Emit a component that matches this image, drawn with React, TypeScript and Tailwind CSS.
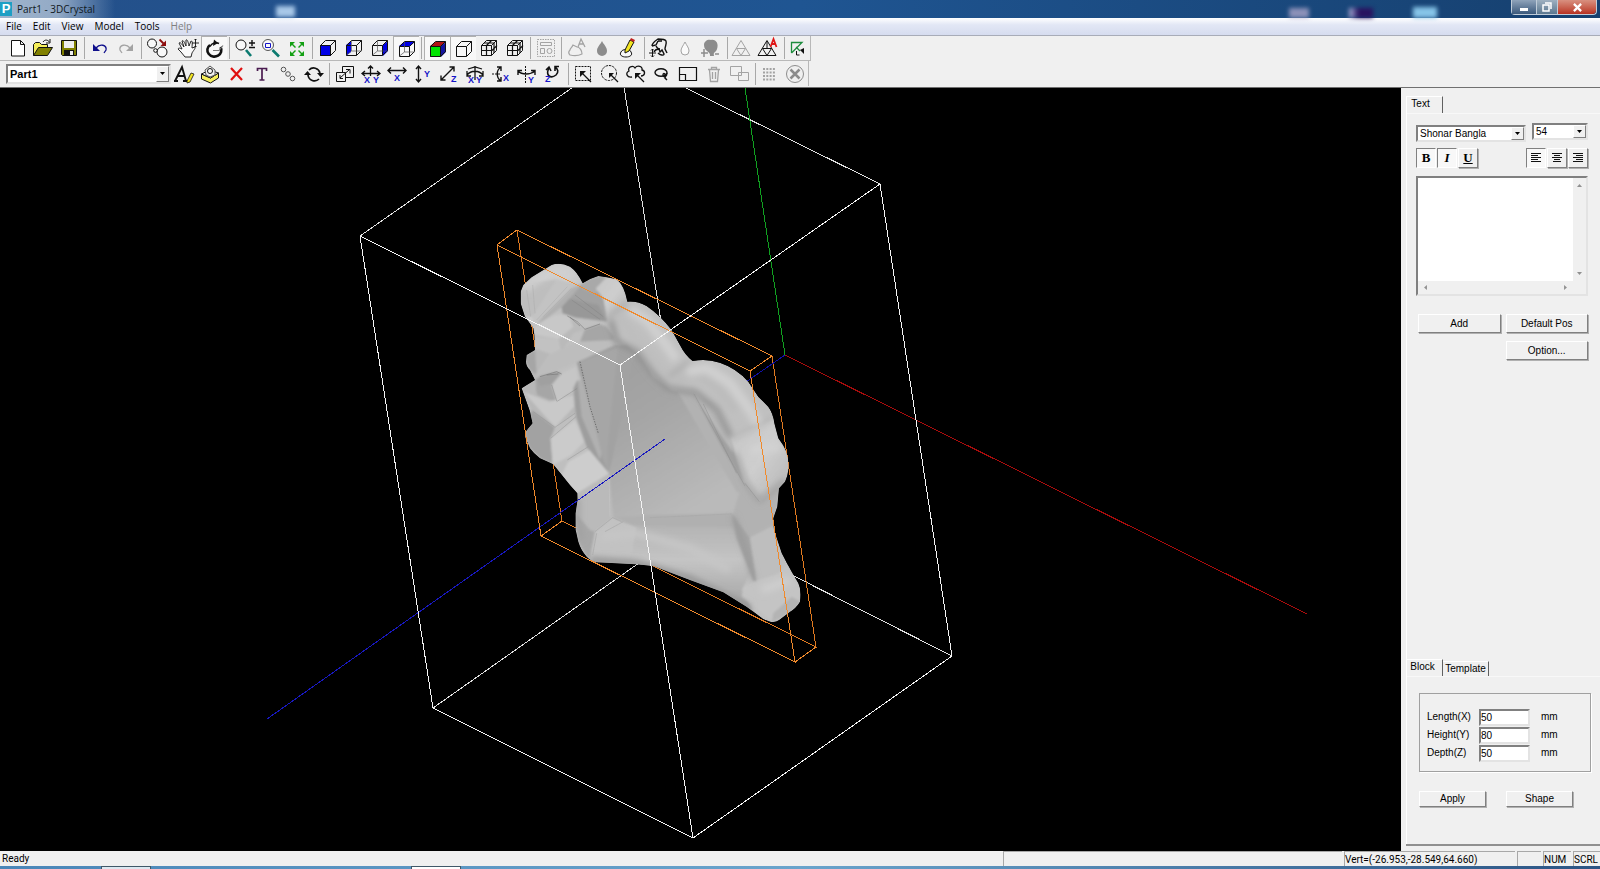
import { useState } from 'react';
import type { ReactNode } from 'react';

type Tool = { name: string; icon?: ReactNode; pressed?: boolean; disabled?: boolean };

const SEP: Tool = { name: 'sep' };
const GAP: Tool = { name: 'gap' };

const K = '#111';
const G = '#a3a3a3';
const B = '#1414c8';

/* ---------- toolbar icons, 24x24 grid ---------- */

function Cube({ face, mesh }: { face?: 'front' | 'left' | 'right' | 'top' | 'solid'; mesh?: boolean }) {
  const c = '#0000e6';
  return (
    <>
      {face === 'solid' && (
        <>
          <path d="M4 9h11v11H4z" fill="#00e400" />
          <path d="M4 9l5-4h11l-5 4z" fill="#b01414" />
          <path d="M15 9l5-4v10l-5 5z" fill="#1414a0" />
        </>
      )}
      {face === 'front' && <path d="M4 9h11v11H4z" fill={c} />}
      {face === 'left' && <path d="M4 9l5-4v11l-5 4z" fill={c} />}
      {face === 'right' && <path d="M15 9l5-4v10l-5 5z" fill={c} />}
      {face === 'top' && <path d="M4 9l5-4h11l-5 4z" fill={c} />}
      <path d="M4.500 9.500h10v10h-10zM4.500 9.500l5-5h10v10l-5 5M14.500 9.500l5-5" stroke={K} />
      {(face === 'left' || face === 'right' || face === 'top') && <path d="M9.500 5v10h10M9.500 15l-5 4" stroke="#555" strokeWidth=".7" />}
      {mesh && <path d="M9.500 9v11M4 14.500h11M14.500 4.500l-5 5M7 7h10v10M15 14.500l5-5" stroke={K} strokeWidth="1.200" />}
    </>
  );
}

const Letter = ({ x, y, c = B, children }: { x: number; y: number; c?: string; children: string }) => (
  <text x={x} y={y} fill={c} stroke="none" fontSize="9" fontWeight="700" fontFamily="Liberation Sans, Arial, sans-serif">{children}</text>
);

const row1: Tool[] = [
  { name: 'New', icon: <path d="M6.500 4.500h9l4 4v11.500h-13zM15.500 4.500v4h4" fill="#fff" stroke={K} /> },
  {
    name: 'Open',
    icon: (
      <>
        <path d="M2.500 19.500v-11l2-2h4l2 2h6v3" fill="#f5ee5a" stroke={K} />
        <path d="M2.500 19.500l5-8h14l-5 8z" fill="#808000" stroke={K} />
        <path d="M12 6c2-3 5-2 6.500 0M19 3v4h-4" stroke={K} />
      </>
    ),
  },
  {
    name: 'Save',
    icon: (
      <>
        <path d="M4.500 4.500h15v15h-14l-1-1z" fill="#808000" stroke={K} />
        <path d="M7 5h10v7H7z" fill="#efefef" />
        <path d="M7 14h10v6H7z" fill={K} />
        <path d="M13 15h3v4h-3z" fill="#efefef" />
      </>
    ),
  },
  SEP,
  { name: 'Undo', icon: <><path d="M8 12c4-5 11-3 10 2l-2 3" stroke="#10108c" strokeWidth="1.300" /><path d="M5 8v7h7z" fill="#10108c" /></> },
  { name: 'Redo', disabled: true, icon: <><path d="M16 12c-4-5-11-3-10 2l2 3" stroke={G} strokeWidth="1.300" /><path d="M19 8v7h-7z" fill={G} /></> },
  SEP,
  {
    name: 'Convert part',
    icon: (
      <>
        <circle cx="7" cy="7.500" r="4.500" fill="#f8f8f8" stroke={K} />
        <circle cx="17" cy="16" r="5" fill="#f8f8f8" stroke={K} />
        <circle cx="10.500" cy="14.500" r="1.800" fill="#f8f8f8" stroke={K} />
        <path d="M14.500 3.500l4 4" stroke="#8c0c0c" strokeWidth="1.800" /><path d="M21 4.500v5.500h-5.500z" fill="#8c0c0c" />
      </>
    ),
  },
  GAP,
  {
    name: 'Pan',
    icon: (
      <>
        <path d="M9 21l-4-5-3-3c1-2 3 0 4 0L3 7c1-1 2 0 5 4L6 5c1-1 2 0 4 5V4c1-1 2 1 3 6l2-5c2 0 1 3 1 7l3-1c1 1-2 4-3 6l-1 4z" fill="#fafafa" stroke={K} strokeWidth=".9" />
        <path d="M19.500 3v8M16 7h7M18.500 4l1-1 1 1M18.500 10l1 1 1-1" stroke={K} strokeWidth=".9" />
      </>
    ),
  },
  {
    name: 'Rotate', pressed: true,
    icon: (
      <>
        <path d="M7 8a7 6.500 0 1 0 10.500 2" stroke={K} strokeWidth="2.600" />
        <path d="M7 9.500c2-4 6-4.500 9-3" stroke={K} strokeWidth="1.600" />
        <path d="M11 2.500l4 3.500-5 3z" fill={K} />
        <path d="M10 13.500h6l4-5" stroke="#777" strokeWidth="1.200" />
      </>
    ),
  },
  SEP,
  {
    name: 'Zoom',
    icon: (
      <>
        <circle cx="8" cy="9" r="5" fill="#f8f8f8" stroke={K} />
        <path d="M13 14l5 6" stroke="#0c7a70" strokeWidth="2.600" />
        <path d="M16 7h6M19 4v6M16 11.500h6" stroke={K} strokeWidth="1.400" />
      </>
    ),
  },
  {
    name: 'Zoom window',
    icon: (
      <>
        <circle cx="9" cy="9" r="5.500" fill="#f8f8f8" stroke="#555" />
        <path d="M6.500 7.500h5v4h-5z" stroke={B} />
        <path d="M13.500 14l6.500 6.500" stroke="#0c7a70" strokeWidth="2.600" />
      </>
    ),
  },
  { name: 'Fit', icon: <path d="M5 6h5l-2 2 3 3-1 1-3-3-2 2zM19 6v5l-2-2-3 3-1-1 3-3-2-2zM5 20v-5l2 2 3-3 1 1-3 3 2 2zM19 20h-5l2-2-3-3 1-1 3 3 2-2z" fill="#14a014" /> },
  SEP,
  { name: 'Front view', icon: <Cube face="front" /> },
  { name: 'Left view', icon: <Cube face="left" /> },
  { name: 'Right view', icon: <Cube face="right" /> },
  { name: 'Top view', pressed: true, icon: <Cube face="top" /> },
  SEP,
  { name: 'Shaded', pressed: true, icon: <Cube face="solid" /> },
  { name: 'Box', pressed: true, icon: <Cube /> },
  { name: 'Wireframe', icon: <Cube mesh /> },
  { name: 'Points', icon: <Cube mesh /> },
  SEP,
  {
    name: 'Layout', disabled: true,
    icon: <><path d="M3.500 3.500h17v17h-17z" stroke={G} strokeDasharray="1.500 1" /><path d="M6.500 6.500h11v3h-11zM6.500 12.500h4v5h-4z" stroke={G} /><circle cx="15.500" cy="15" r="2.500" stroke={G} /></>,
  },
  SEP,
  {
    name: 'Text surface', disabled: true,
    icon: <><path d="M5 14c0-2 2-2 3-5l4 2c3 0 5 4 5 7-4 2-8 2-12 1-2-2-1-4 0-5z" stroke={G} strokeWidth="1.200" /><path d="M13 11l3-8 4 8M14.500 8h4.500" stroke={G} strokeWidth="1.300" /></>,
  },
  { name: 'Drop', disabled: true, icon: <path d="M11 5c2 4 5 6 5 10a5 5 0 0 1-10 0c0-4 3-6 5-10z" fill="#8c8c8c" /> },
  {
    name: 'Paint',
    icon: (
      <>
        <path d="M4 16c1-3 9-4 10 0 2 3-1 5-5 5s-7-2-5-5z" fill="#f8f8f8" stroke={K} />
        <path d="M8 14l5-10 4 2-5 9-4 2z" fill="#f2e420" stroke={K} />
        <path d="M13 4l1-2 4 2-1 2z" fill="#c02020" />
      </>
    ),
  },
  SEP,
  {
    name: 'Sculpt',
    icon: <><path d="M4 10c0-3 3-5 6-7 3 0 7 0 8 2 1 3-1 5-1 8l2 4M4 10l4-1 2-4M8 10c1 2 2 3 4 3M10 5l4 0M6 16c1-2 3-3 5-3l1 3 2-2 2 4c0 2-4 1-6-1" stroke={K} strokeWidth="1.400" /><path d="M4.500 13v8M1 17h7M3 14.500L4.500 13 6 14.500M3 19.500L4.500 21 6 19.500" stroke={K} /></>,
  },
  { name: 'Drop outline', disabled: true, icon: <path d="M11 6c2 4 4 6 4 9a4 4 0 0 1-8 0c0-3 2-5 4-9z" fill="#fafafa" stroke={G} /> },
  { name: 'Tree', disabled: true, icon: <><path d="M4 9c0-4 4-6 7-5 5-1 8 4 6 9-1 4-4 2-3 7h-4c1-5-6-4-6-11z" fill="#8c8c8c" /><path d="M4 13v8M1 17h7M15 18h4" stroke="#8c8c8c" strokeWidth="1.500" /></> },
  SEP,
  { name: 'Triangles', disabled: true, icon: <path d="M10 4.500l9 15H1zM5.500 12.500h9l-4.500 7z" stroke={G} /> },
  { name: 'Triangles text', icon: <><path d="M10 4.500l9 15H1zM5.500 12.500h9l-4.500 7zM10 5v7" stroke={K} /><path d="M13.500 11l3-8 3 8M14.500 8h4" stroke="#e01818" strokeWidth="1.800" /></> },
  SEP,
  { name: 'Measure', icon: <><path d="M3.500 17V6.500H14L3.500 17M8 11l4 4" stroke="#1c8c3c" strokeWidth="1.300" /><path d="M8.500 15v4h3" stroke={K} /><path d="M16 12v6l-4-4z" fill={K} /></> },
];

const row2: Tool[] = [
  { name: 'Edit text', icon: <><path d="M3 19l7-14 4 14M6 14h7M2 19h4M11 19h5" stroke={K} strokeWidth="1.900" /><path d="M15 19l4-8 3 1-4 8-3 1z" fill="#f2e420" stroke={K} strokeWidth=".8" /></> },
  {
    name: 'Open box',
    icon: (
      <>
        <path d="M3.500 12v5l9 4 8-5v-5l-8 5z" fill="#f5ee5a" stroke={K} />
        <path d="M3.500 12l8-4 9 3-8 5z" fill="#f8f8f8" stroke={K} />
        <path d="M7 8l5-4 5 4v5l-5 2-4-2z" fill="#f0f0f0" stroke="#555" />
        <circle cx="12" cy="9" r="2.500" fill="#f8f8f8" stroke={K} />
      </>
    ),
  },
  { name: 'Delete', icon: <path d="M7 6l11 12M18 6L7 18" stroke="#e01010" strokeWidth="2.200" /> },
  { name: 'Text', icon: <path d="M7.500 9V6.500h9V9M12 6.500V18M9.500 18h5" stroke="#4a1c50" strokeWidth="1.700" /> },
  { name: 'Chain', icon: <><circle cx="7.500" cy="7.500" r="2.300" stroke="#555" /><circle cx="12" cy="12" r="2.300" stroke="#555" /><circle cx="16.500" cy="16.500" r="2.300" stroke="#555" /></> },
  { name: 'Refresh', icon: <><path d="M7 8a6.500 6.500 0 0 1 11 3M17 17a6.500 6.500 0 0 1-11-4" stroke={K} strokeWidth="1.700" /><path d="M15 11h7l-3.500 4zM9 13H2l3.500-4z" fill={K} /></> },
  SEP,
  { name: 'Scale', icon: <path d="M3.500 10.500h9v9h-9zM9.500 10V4.500h11v11H13M7 16l9-8M13 7.500h4v4M7 13v3.500h3" stroke={K} /> },
  { name: 'Move XY', icon: <><path d="M11.500 4v10M3 11.500h18M9 6.500L11.500 4 14 6.500M6 9l-3 2.500L6 14M18 9l3 2.500-3 2.500" stroke={K} strokeWidth="1.300" /><Letter x={5} y={21}>X</Letter><Letter x={14} y={21}>Y</Letter></> },
  { name: 'Move X', icon: <><path d="M3 8.500h18M6 5.500l-3 3 3 3M18 5.500l3 3-3 3" stroke={K} strokeWidth="1.400" /><Letter x={9} y={19}>X</Letter></> },
  { name: 'Move Y', icon: <><path d="M7.500 4v16M5 7l2.500-3L10 7M5 17l2.500 3 2.500-3" stroke={K} strokeWidth="1.400" /><Letter x={13} y={15}>Y</Letter></> },
  { name: 'Move Z', icon: <><path d="M4 18L17 5M12.500 5H17v4.500M4 13.500V18h4.500" stroke={K} strokeWidth="1.400" /><Letter x={14} y={20}>Z</Letter></> },
  { name: 'Rotate XY', icon: <><path d="M12 4v14M4 13c4-5 12-5 16 0M5 7l7-2 7 2M4 9v5h4M20 9v5h-4" stroke={K} strokeWidth="1.300" /><Letter x={5} y={21}>X</Letter><Letter x={13} y={21}>Y</Letter></> },
  { name: 'Rotate X', icon: <><path d="M3 12h9" stroke={K} strokeDasharray="2 1" /><path d="M12 5c-5 3-5 11 0 14M8 5h4v4M8 19h4v-4" stroke={K} strokeWidth="1.400" /><Letter x={14} y={19}>X</Letter></> },
  { name: 'Rotate Y', icon: <><path d="M10.500 4v17" stroke={K} strokeDasharray="2 1" /><path d="M3 9c4 4 12 4 17 0M3 13V8.500h4M20 13V8.500h-4" stroke={K} strokeWidth="1.400" /><Letter x={13} y={21}>Y</Letter></> },
  { name: 'Rotate Z', icon: <><path d="M8 6c-4 8 2 11 7 7 3-3 2-6-1-8M14 9V4.500h4M5 8l3-3 2 4" stroke={K} strokeWidth="1.600" /><Letter x={4} y={20}>Z</Letter></> },
  SEP,
  { name: 'Select rectangle', icon: <><path d="M3.500 4.500h15v14h-15z" stroke={K} strokeDasharray="2 1" /><path d="M9 10l10 10" stroke={K} strokeWidth="1.300" /><path d="M8 9h6l-6 6z" fill={K} /></> },
  { name: 'Select circle', icon: <><circle cx="11" cy="11" r="7.500" stroke={K} strokeDasharray="2.500 1" /><path d="M12 12l8 8" stroke={K} strokeWidth="1.300" /><path d="M11 11h5l-5 5z" fill={K} /></> },
  { name: 'Select free', icon: <><path d="M8 15c-5 1-7-4-3-6-2-4 4-6 6-3 2-3 8-2 7 2 4 1 3 6-1 6" stroke={K} strokeWidth="1.300" /><path d="M12 12l8 8" stroke={K} strokeWidth="1.300" /><path d="M11 11h6l-6 6z" fill={K} /></> },
  { name: 'Lasso', icon: <><ellipse cx="11" cy="10.500" rx="6" ry="3.800" stroke={K} strokeWidth="1.400" /><path d="M17 11c0 4-4 5-4 2s4-1 2 3l2 2" stroke={K} strokeWidth="1.400" /></> },
  { name: 'Region', icon: <path d="M3.500 5.500h17v13h-17zM3.500 12.500h6v6" stroke={K} strokeWidth="1.200" /> },
  { name: 'Trash', disabled: true, icon: <path d="M6 7.500h12M9.500 7V5.500h5V7M7.500 8l1 11.500h7l1-11.500M10.500 10v7M13.500 10v7" stroke={G} strokeWidth="1.300" /> },
  { name: 'Group', disabled: true, icon: <path d="M2.500 4.500h11v9h-11zM10.500 10.500h10v8h-10z" stroke={G} fill="#f0f0f0" /> },
  SEP,
  { name: 'Grid', disabled: true, icon: <path d="M4 7h12M4 10.500h12M4 14h12M4 17.500h12" stroke={G} strokeWidth="2" strokeDasharray="2 1.300" /> },
  { name: 'Cancel', disabled: true, icon: <><circle cx="10" cy="12" r="8.500" stroke="#8c8c8c" /><path d="M5.500 7.500l9 9M14.500 7.500l-9 9" stroke="#8c8c8c" strokeWidth="2.500" /></> },
];

function ToolRow({ tools }: { tools: Tool[] }) {
  return (
    <>
      {tools.map((t, i) => {
        if (t.name === 'sep') {
          return (
            <span key={i} className="flex w-[5px] shrink-0 justify-center">
              <span className="h-[22px] w-px bg-[#a8a8a8]" />
            </span>
          );
        }
        if (t.name === 'gap') return <span key={i} className="w-[5px] shrink-0" />;
        return (
          <button
            key={i}
            type="button"
            aria-label={t.name}
            disabled={t.disabled}
            className={`flex h-6 w-[26px] shrink-0 items-center justify-center ${t.pressed ? 'border-t border-l border-[#b0b0b0] bg-[#f8f8f8]' : ''}`}
          >
            <svg viewBox="0 0 24 24" className="size-6 shrink-0" fill="none">{t.icon}</svg>
          </button>
        );
      })}
    </>
  );
}

/* ---------- 3D view ---------- */

const outline =
  'M92 215L100 195L125 172L185 135Q210 125 240 140Q262 155 278 190Q300 175 325 168L350 172L380 178Q402 195 412 245Q440 242 470 258Q510 285 545 330L570 375Q585 405 608 423Q650 415 690 428Q740 445 775 485L805 530L835 560Q850 580 853 610L865 655Q880 675 887 690Q898 720 895 750Q893 770 885 785L867 805L862 860L850 895L852 930L875 1000L905 1055L925 1090Q935 1110 930 1145Q918 1165 900 1175L868 1200Q855 1209 840 1205L820 1198L770 1160L700 1117L600 1080L490 1038L440 1033L320 1027Q300 1022 290 1010Q272 990 265 965L257 930L257 880L263 840L262 820L240 795L190 733L150 715Q130 700 120 685L105 650L107 635L128 610L120 575L95 505L135 480L120 450Q108 440 108 425L110 405L135 390L133 345L130 325L105 290L92 250Z';

// [path, fill], drawn back to front
const facets: [string, string][] = [
  // inner plate and its folds
  ['M260 425L375 375L410 376L450 405L490 470L545 510L610 520L690 590L735 700L770 800L735 880L720 895L480 893L370 895L357 760L330 690Z', 'url(#plane)'],
  ['M270 425L385 380L420 450L375 640L352 760L330 690L300 560Z', '#a6a6a6'],
  ['M385 378L440 400L425 440L370 700L357 760L352 700Z', '#a2a2a2'],
  ['M610 520L560 510L742 820L765 800Z', '#b2b2b2'],
  ['M612 525L640 550L725 660L735 700L765 795L700 690Z', '#a0a0a0'],
  ['M612 525L660 545L720 640L730 700L655 590Z', '#b9b9b9'],
  // top left knob
  ['M92 215L100 195L125 172L185 135Q210 125 240 140Q262 155 278 190L215 262L140 318L105 290L92 250Z', 'url(#knob)'],
  ['M92 215L130 185L200 178L128 290L105 290L92 250Z', '#bebebe'],
  ['M200 178L270 195L215 258L140 318L125 290L160 240Z', '#c3c3c3'],
  ['M278 190L245 205L150 300L142 316L215 262Z', '#b0b0b0'],
  // gap between the two top knobs
  ['M278 190L215 262L220 280L255 292L352 305L340 235L325 215Z', '#a2a2a2'],
  ['M238 236L325 255L350 303L255 292L218 280L215 262Z', '#989898'],
  ['M278 190Q300 175 325 168L350 172L318 205L322 225L275 207Z', '#a9a9a9'],
  ['M318 205L350 172L380 178Q402 195 412 245L385 265L352 290L340 235Z', 'url(#knob)'],
  // left side steps
  ['M130 325L155 305L195 285Q225 280 240 292L250 320L235 335L205 358L135 345Z', '#c8c8c8'],
  ['M240 292L285 328L250 340L205 412L160 402L133 385L133 345L205 358L250 320Z', '#bababa'],
  ['M135 350L205 358L215 400L205 412L160 402L133 385Z', '#c2c2c2'],
  ['M285 328L330 313L350 320L372 350L374 378L290 405L262 385Z', '#a6a6a6'],
  ['M110 405L140 388L175 400L205 412L262 370L290 402L265 425L180 458L135 480L118 450L108 425Z', '#b8b8b8'],
  ['M110 405L135 390L140 465L120 450L108 425Z', '#a6a6a6'],
  ['M175 405L262 365L372 360L374 375L265 425L140 475L135 465Z', '#bdbdbd'],
  ['M135 482L150 468L200 455L215 460L185 495L150 500Z', '#a0a0a0'],
  ['M135 485L150 498L185 495L200 543L178 540L140 525Z', '#a6a6a6'],
  ['M185 495L215 460L258 440L265 480L262 505L200 543Z', '#c6c6c6'],
  ['M95 505L135 480L140 525L178 540L200 545L250 520L256 578L195 622L125 572Z', '#b8b8b8'],
  ['M100 515L178 545L250 525L252 560L195 622Z', '#c9c9c9'],
  ['M125 570L195 622L190 645L182 660L190 733L150 715L120 685L105 650L107 635Z', '#a2a2a2'],
  ['M182 655L195 622L255 580L270 640L290 685L232 720L215 765L188 735Z', '#bfbfbf'],
  ['M182 655L255 600L282 665L245 705L188 735Z', '#cbcbcb'],
  ['M250 505L262 480L275 500L340 720L357 760L335 745L290 680L258 590Z', '#9e9e9e'],
  ['M264 490L275 470L335 700L330 720L275 590Z', '#b0b0b0'],
  ['M215 765L235 725L298 690L357 760L262 820L240 797Z', '#cdcdcd'],
  ['M262 820L357 762L362 830L368 893L315 935L257 930L257 880Z', '#bababa'],
  // bottom rim
  ['M257 880L300 930L315 935L305 1015L290 1010L265 965Z', '#a8a8a8'],
  ['M315 935L368 893L440 922L430 1033L320 1027Q300 1020 300 1010Z', '#c2c2c2'],
  ['M368 893L480 885L725 880L730 900L740 935L440 922Z', '#b0b0b0'],
  ['M440 918L735 922L790 1040L755 1110L790 1175L700 1117L490 1038L420 1033Z', 'url(#foot)'],
  // right rim
  ['M722 655L850 598L865 655L893 705L895 750L885 785L808 845L765 790L735 700Z', 'url(#knob)'],
  ['M760 780L808 845L885 785L867 805L862 860L850 895L855 915L775 955L728 890L735 860Z', '#b2b2b2'],
  ['M725 880L780 955L800 1085L790 1083L740 955Z', '#a4a4a4'],
  ['M780 955L852 920L885 1020L865 1060L800 1085Z', '#bebebe'],
  ['M790 1085L865 1060L892 1035L925 1090Q935 1110 930 1145L850 1207L755 1130L760 1100Z', '#c4c4c4'],
  ['M845 1207L850 1180L905 1130L932 1145L900 1180Z', '#b4b4b4'],
];

// soft shading strokes along the rim: [path, colour, width]
const shades: [string, string, number][] = [
  ['M362 300L380 365L440 395L490 462L535 505L615 516L680 568L722 650', '#909090', 16],
  ['M375 275L410 320L450 370L500 430L530 460', '#bebebe', 26],
  ['M420 268L470 300L525 370L560 420', '#d0d0d0', 30],
  ['M545 490L620 460L680 500L740 570', '#bcbcbc', 26],
  ['M590 455L650 445L720 490L780 570L810 620', '#d0d0d0', 30],
  ['M535 470L600 425', '#a2a2a2', 8],
  ['M352 292L412 247', '#a4a4a4', 8],
  ['M728 658L850 594', '#b0b0b0', 8],
  ['M735 700L768 788L808 842L886 782', '#9c9c9c', 12],
  ['M780 690L870 680', '#d2d2d2', 26],
  ['M335 950L440 940L600 985L720 1050', '#c6c6c6', 24],
  ['M300 1020L440 1030L600 1076L780 1165', '#929292', 18],
  ['M730 890L765 990L792 1080', '#959595', 10],
  ['M262 835L262 900L275 960', '#a0a0a0', 14],
  ['M110 210L130 188L200 150L240 165', '#d2d2d2', 18],
  ['M815 1110L900 1080', '#cecece', 24],
];

// thin creases
const creases: [string, string][] = [
  ['M245 205L160 290M232 200L140 300M110 210L122 290M128 195L135 280', '#adadad'],
  ['M255 225L340 290M245 240L330 298', '#858585'],
  ['M232 288L262 305L285 328L330 312M240 292L270 318', '#6e6e6e'],
  ['M150 470L200 455L215 462M170 465L205 462', '#6a6a6a'],
  ['M130 575L195 622L255 580M182 655L258 590M232 720L295 680', '#969696'],
  ['M185 495L200 543M200 545L262 505', '#8a8a8a'],
  ['M315 935L368 893L395 905M320 940L308 1005M345 935L400 905', '#a0a0a0'],
  ['M640 552L740 760M612 522L765 798', '#909090'],
  ['M480 893L725 882', '#a6a6a6'],
  ['M808 845L765 790', '#909090'],
  ['M360 890L357 765', '#c8c8c8'],
];

function Viewport() {
  return (
    <svg viewBox="0 88 1401 763" preserveAspectRatio="xMinYMin slice" className="block size-full" fill="none" role="img" aria-label="3D view">
      <defs>
        <linearGradient id="plane" x1="0" y1="0" x2=".6" y2="1">
          <stop offset="0" stopColor="#9c9c9c" />
          <stop offset=".5" stopColor="#a6a6a6" />
          <stop offset="1" stopColor="#bababa" />
        </linearGradient>
        <linearGradient id="knob" x1="0" y1="0" x2="1" y2="1">
          <stop offset="0" stopColor="#c6c6c6" />
          <stop offset=".5" stopColor="#cecece" />
          <stop offset="1" stopColor="#b4b4b4" />
        </linearGradient>
        <linearGradient id="foot" x1="0" y1="0" x2="0" y2="1">
          <stop offset="0" stopColor="#b4b4b4" />
          <stop offset=".4" stopColor="#c4c4c4" />
          <stop offset="1" stopColor="#a2a2a2" />
        </linearGradient>
        <clipPath id="body"><path d={outline} /></clipPath>
        <filter id="soft"><feGaussianBlur stdDeviation="9" /></filter>
        <filter id="edge"><feGaussianBlur stdDeviation="3" /></filter>
      </defs>

      {/* lines behind the model */}
      <g strokeWidth="1" shapeRendering="crispEdges">
        <path d="M360 236L619 55L880 184M619 55L693 525M433 708L693 525L952 656" stroke="#e0e0e0" />
        <path d="M517 230L562 521L816 647L772 356" stroke="#e07a20" />
        <path d="M745 88L785 355" stroke="#10a020" />
        <path d="M785 355L1307 614" stroke="#a80c0c" />
        <path d="M785 355L740 386" stroke="#1010a8" />
      </g>

      <g transform="translate(490 220) scale(.3333)">
        <g clipPath="url(#body)">
          <path d={outline} fill="#c0c0c0" />
          <g filter="url(#edge)">
            {facets.map(([d, fill], i) => <path key={i} d={d} fill={fill} />)}
          </g>
          <g filter="url(#soft)">
            {shades.map(([d, c, w], i) => <path key={i} d={d} stroke={c} strokeWidth={w} />)}
          </g>
          {creases.map(([d, c], i) => <path key={i} d={d} stroke={c} strokeWidth="3" opacity=".5" />)}
          <path d="M270 425L300 560L325 640" stroke="#6a6a6a" strokeWidth="3" strokeDasharray="4 4" />
        </g>
      </g>

      {/* lines in front */}
      <g strokeWidth="1" shapeRendering="crispEdges">
        <path d="M665 439L267 719" stroke="#1818c0" />
        <path d="M517 230L497 245L750 371L772 356ZM497 245L541 536L795 662L750 371M541 536L562 521M795 662L816 647" stroke="#f08a2c" />
        <path d="M360 236L620 365L880 184M620 365L693 838M360 236L433 708L693 838L952 656L880 184" stroke="#f4f4f4" />
      </g>
    </svg>
  );
}

/* ---------- side panel ---------- */

const raised = 'border border-t-white border-l-white border-r-[#808080] border-b-[#808080] shadow-[1px_1px_0_#b0b0b0]';
const sunken = 'border-2 border-t-[#808080] border-l-[#808080] border-r-[#e3e3e3] border-b-[#e3e3e3]';

function Arrow({ className }: { className: string }) {
  return (
    <svg viewBox="0 0 7 4" className={className} aria-hidden="true"><path d="M0 0h7L3.500 4z" fill="currentColor" /></svg>
  );
}

function Combo({ label, options, className, selectClass }: { label: string; options: string[]; className: string; selectClass?: string }) {
  return (
    <div className={`flex bg-white ${sunken} ${className}`}>
      <select aria-label={label} className={`min-w-0 flex-1 appearance-none bg-white pl-[2px] outline-none ${selectClass || ''}`}>
        {options.map((o) => <option key={o}>{o}</option>)}
      </select>
      <span className="flex w-[13px] shrink-0 items-center justify-center border border-t-white border-l-white border-r-[#808080] border-b-[#808080] bg-[#f0f0f0]">
        <Arrow className="h-[3px] w-[5px] text-black" />
      </span>
    </div>
  );
}

function FormatButton({ name, on, children }: { name: string; on?: boolean; children: ReactNode }) {
  return (
    <button type="button" aria-label={name} aria-pressed={!!on} className={`flex size-5 items-center justify-center font-['Liberation_Serif',serif] text-[13px] font-bold ${on ? 'border border-t-[#808080] border-l-[#808080] border-r-white border-b-white bg-[#f8f8f8]' : raised}`}>
      {children}
    </button>
  );
}

function Lines({ d }: { d: string }) {
  return <svg viewBox="0 0 12 12" className="size-3" fill="none"><path d={d} stroke="#111" /></svg>;
}

function SidePanel() {
  const [text, setText] = useState('');
  const [block, setBlock] = useState({ 'Length(X)': '50', 'Height(Y)': '80', 'Depth(Z)': '50' });

  return (
    <aside className="flex w-[199px] shrink-0 flex-col pl-[5px] text-[10px] leading-[14px]">
      <div className="flex flex-1 flex-col border-b-2 border-[#909090]">
        <section className="mt-2 flex-1 border-l border-white">
          <div className="flex items-end" role="tablist">
            <button type="button" role="tab" aria-selected="true" className="flex h-[17px] w-9 justify-center border-t border-r border-t-white border-r-[#606060] pr-2">Text</button>
          </div>
          <div className="border-t border-[#f8f8f8] pt-[9px] pr-3 pl-[9px]">
            <div className="flex items-start justify-between">
              <Combo label="Font" options={['Shonar Bangla']} className="mt-[2px] h-[17px] w-[110px]" />
              <Combo label="Font size" options={['54']} className="h-[17px] w-[56px]" />
            </div>
            <div className="mt-[6px] flex justify-between">
              <div className="flex gap-px">
                <FormatButton name="Bold" on>B</FormatButton>
                <FormatButton name="Italic" on><i>I</i></FormatButton>
                <FormatButton name="Underline"><u>U</u></FormatButton>
              </div>
              <div className="flex gap-px">
                <FormatButton name="Align left" on><Lines d="M1 1.500h10M1 3.500h7M1 5.500h10M1 7.500h7M1 9.500h10" /></FormatButton>
                <FormatButton name="Align center"><Lines d="M1 1.500h10M3 3.500h6M1 5.500h10M3 7.500h6M2 9.500h8" /></FormatButton>
                <FormatButton name="Align right"><Lines d="M1 1.500h10M4 3.500h7M1 5.500h10M4 7.500h7M1 9.500h10" /></FormatButton>
              </div>
            </div>
            <div className={`mt-2 grid h-[120px] grid-cols-[1fr_13px] grid-rows-[1fr_13px] ${sunken}`}>
              <textarea aria-label="Text" value={text} onChange={(e) => setText(e.target.value)} className="resize-none overflow-hidden bg-white px-1 outline-none" />
              <div className="flex flex-col items-center justify-between py-[6px] text-[#909090]">
                <Arrow className="h-[3px] w-[5px] rotate-180" />
                <Arrow className="h-[3px] w-[5px]" />
              </div>
              <div className="flex items-center justify-between px-[5px] text-[#909090]">
                <Arrow className="h-[3px] w-[5px] rotate-90" />
                <Arrow className="h-[3px] w-[5px] -rotate-90" />
              </div>
            </div>
            <div className="mt-[18px] grid grid-cols-2 gap-x-[5px] gap-y-2 pl-[2px]">
              <button type="button" className={`h-[19px] ${raised}`}>Add</button>
              <button type="button" className={`h-[19px] ${raised}`}>Default Pos</button>
              <button type="button" className={`col-start-2 h-[19px] ${raised}`}>Option...</button>
            </div>
          </div>
        </section>

        <section className="border-l border-white">
          <div className="flex items-end" role="tablist">
            <button type="button" role="tab" aria-selected="true" className="flex h-[17px] w-9 justify-center border-t border-r border-t-white border-r-[#606060] pr-1">Block</button>
            <button type="button" role="tab" aria-selected="false" className="h-[15px] w-[46px] border-t border-r border-t-white border-r-[#606060] text-center">Template</button>
          </div>
          <div className="border-t border-[#f8f8f8] pt-4 pb-[37px] pl-3">
            <fieldset className="mr-[9px] flex flex-col border border-[#a0a0a0] pt-[14px] pb-[9px] pl-[7px] shadow-[1px_1px_0_#fff]">
              {Object.entries(block).map(([name, value]) => (
                <label key={name} className="flex h-[18px] items-center">
                  <span className="w-[52px]">{name}</span>
                  <input value={value} onChange={(e) => setBlock({ ...block, [name]: e.target.value })} className={`h-[17px] w-[51px] bg-white outline-none ${sunken}`} />
                  <span className="ml-[11px]">mm</span>
                </label>
              ))}
            </fieldset>
            <div className="mt-[19px] flex gap-5">
              <button type="button" className={`h-4 w-[67px] ${raised}`}>Apply</button>
              <button type="button" className={`h-4 w-[67px] ${raised}`}>Shape</button>
            </div>
          </div>
        </section>
      </div>
      <div className="h-[5px]" />
    </aside>
  );
}

const menus = ['File', 'Edit', 'View', 'Model', 'Tools', 'Help'];

export default function App() {
  return (
    <div className="flex h-screen flex-col overflow-hidden bg-[#f0f0f0] font-['Liberation_Sans',sans-serif] text-black">
      <header className="flex h-[18px] shrink-0 items-start bg-linear-to-r from-[#24508a] via-[#1f5592] to-[#16406f]">
        <div className="flex h-full items-center bg-linear-to-r from-[#9fb4cc] via-[#93aac6] to-transparent pr-5 text-[11px]">
          <span className="flex h-[14px] w-3 items-center justify-center bg-[#1e9fc4] text-[13px] font-bold text-white">P</span>
          <h1 className="ml-[5px] font-['Open_Sans',sans-serif] text-[10px] text-[#101820]">Part1 - 3DCrystal</h1>
        </div>
        <span className="mt-[6px] ml-[161px] h-[11px] w-[19px] bg-[#a8c8e8] blur-[2px]" />
        <div className="ml-auto flex h-full items-start">
          <div className="flex h-full items-end gap-10 pr-[74px]">
            <span className="h-[10px] w-5 bg-[#a9a3c8] opacity-80 blur-[2px]" />
            <span className="h-[10px] w-6 bg-linear-to-r from-[#b4b4dc] to-[#2a1260] to-40% blur-[2px]" />
            <span className="h-[11px] w-6 bg-[#86c4e8] blur-[2px]" />
          </div>
          <div className="mr-[3px] flex h-[15px] rounded-b border border-t-0 border-[#c0ccd8]">
            <button type="button" aria-label="Minimize" className="flex w-6 items-center justify-center bg-linear-to-b from-[#8fa3ba] to-[#3c5a7c]">
              <span className="mt-1 h-[3px] w-2 bg-white" />
            </button>
            <button type="button" aria-label="Restore" className="flex w-[22px] items-center justify-center border-x border-[#c0ccd8] bg-linear-to-b from-[#9eb0c0] to-[#5c7890]">
              <svg viewBox="0 0 10 10" className="size-[10px]" fill="none"><path d="M1 3h6v6H1zM3 1h6v6" stroke="#fff" strokeWidth="1.500" /></svg>
            </button>
            <button type="button" aria-label="Close" className="flex w-[38px] items-center justify-center rounded-br bg-linear-to-b from-[#d89080] to-[#b83020]">
              <svg viewBox="0 0 10 10" className="size-[9px]"><path d="M1 1l8 8M9 1L1 9" stroke="#fff" strokeWidth="2.500" /></svg>
            </button>
          </div>
        </div>
      </header>

      <nav className="flex h-[18px] shrink-0 items-center gap-[11px] border-b border-[#a8acb8] bg-linear-to-b from-white via-[#e2e7f5] via-40% to-[#d6dcef] px-[6px] font-['Open_Sans',sans-serif] text-[10px]">
        {menus.map((m) => (
          <button key={m} type="button" className={m === 'Help' ? 'text-[#808080]' : ''}>{m}</button>
        ))}
      </nav>

      <div className="shrink-0 border-b border-[#707070] pb-px">
        <div className="flex h-[25px] w-[811px] items-center border-r border-b border-[#b8b8b8] pl-1" role="toolbar" aria-label="Standard">
          <ToolRow tools={row1} />
        </div>
        <div className="flex h-[25px] w-[809px] items-center border-r border-[#b8b8b8] pl-[6px]" role="toolbar" aria-label="Edit">
          <Combo label="Part" options={['Part1']} className="h-5 w-[165px] shrink-0" selectClass="text-[11px] font-bold" />
          <ToolRow tools={row2} />
        </div>
      </div>

      <div className="flex min-h-0 flex-1">
        <main className="min-w-0 flex-1 bg-black"><Viewport /></main>
        <SidePanel />
      </div>

      <footer className="flex h-[15px] shrink-0 items-stretch gap-[2px] font-['Roboto',sans-serif] text-[10px] leading-[15px]">
        <span className="flex-1 pl-[2px]">Ready</span>
        <span className="w-[339px] border-t border-l border-[#a8a8a8]" />
        <span className="w-[171px] border-t border-l border-[#a8a8a8]">Vert=(-26.953,-28.549,64.660)</span>
        <span className="w-6 border-t border-l border-[#a8a8a8]" />
        <span className="w-7 border-t border-l border-[#a8a8a8]">NUM</span>
        <span className="w-[27px] border-t border-l border-[#a8a8a8]">SCRL</span>
      </footer>
      <div className="flex h-[3px] shrink-0 gap-[260px] bg-linear-to-r from-[#4a86b8] via-[#6aa4cc] to-[#2c5484] pl-[101px]">
        <span className="w-[50px] border-x border-t border-[#405868] bg-[#dce8f0]" />
        <span className="w-[50px] border-x border-t border-[#405868] bg-white" />
      </div>
    </div>
  );
}
